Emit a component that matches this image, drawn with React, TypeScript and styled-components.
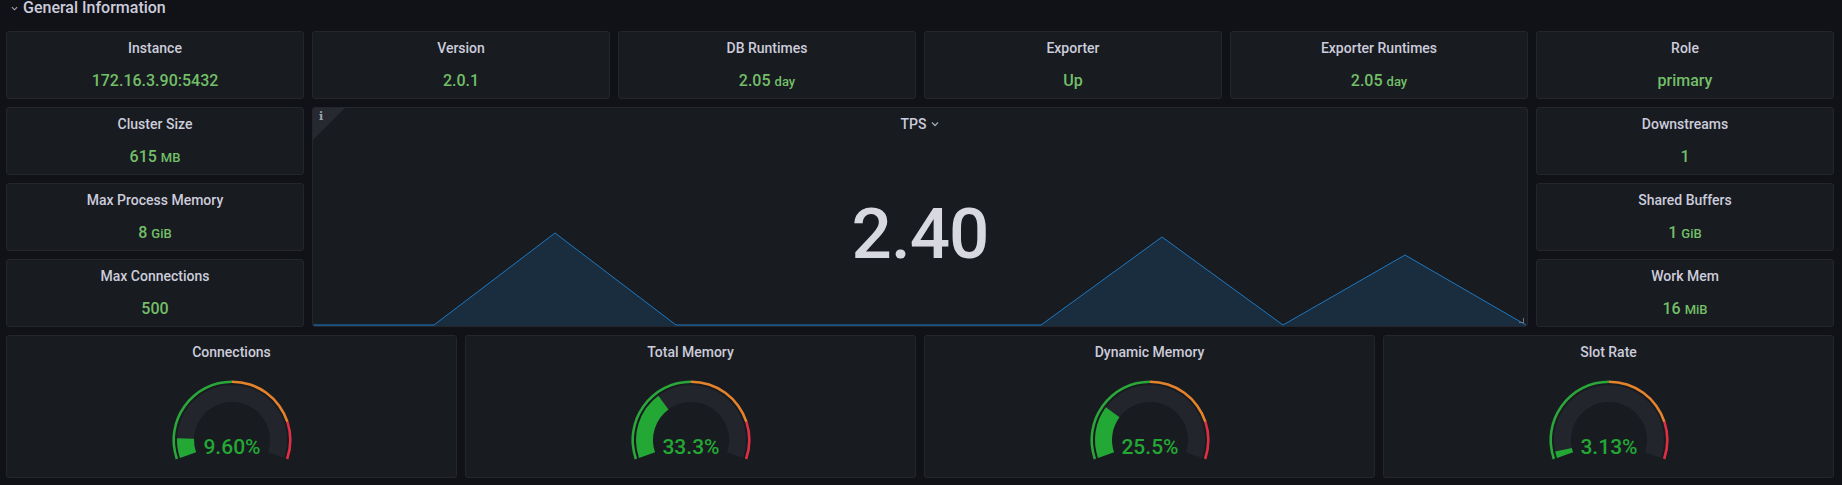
import React from 'react'
import styled, { createGlobalStyle } from 'styled-components'

const GlobalStyle = createGlobalStyle`
  body {
    margin: 0;
    background: #111217;
    font-family: Roboto, "Liberation Sans", sans-serif;
    color: #ccccdc;
  }
`

interface Stat {
  title: string;
  value: string;
  unit?: string;
}

const topRow: Stat[] = [
  { title: 'Instance', value: '172.16.3.90:5432' },
  { title: 'Version', value: '2.0.1' },
  { title: 'DB Runtimes', value: '2.05', unit: 'day' },
  { title: 'Exporter', value: 'Up' },
  { title: 'Exporter Runtimes', value: '2.05', unit: 'day' },
  { title: 'Role', value: 'primary' },
]

// left / right columns, interleaved so auto-placement fills around the TPS panel
const sideStats: Stat[] = [
  { title: 'Cluster Size', value: '615', unit: 'MB' },
  { title: 'Downstreams', value: '1' },
  { title: 'Max Process Memory', value: '8', unit: 'GiB' },
  { title: 'Shared Buffers', value: '1', unit: 'GiB' },
  { title: 'Max Connections', value: '500' },
  { title: 'Work Mem', value: '16', unit: 'MiB' },
]

const gauges = [
  { title: 'Connections', value: 9.6, label: '9.60%' },
  { title: 'Total Memory', value: 33.3, label: '33.3%' },
  { title: 'Dynamic Memory', value: 25.5, label: '25.5%' },
  { title: 'Slot Rate', value: 3.13, label: '3.13%' },
]

const sparkPoints: [number, number][] = [
  [0, 217], [121, 217], [242, 125], [363, 217], [728, 217],
  [849, 129], [970, 217], [1092, 147], [1213, 217],
]

const Chevron: React.FC<{ size?: number }> = ({ size = 7 }) => (
  <svg width={size} height={size} viewBox='0 0 8 8'>
    <path d='M1 2.5 L4 5.5 L7 2.5' fill='none' stroke='#9fa7b3' strokeWidth='1.3' />
  </svg>
)

// gauge geometry
const CX = 70
const CY = 62
const START = -109
const SWEEP = 218

const pt = (r: number, a: number) => {
  const rad = (a * Math.PI) / 180
  return [CX + r * Math.sin(rad), CY - r * Math.cos(rad)]
}

const band = (r0: number, r1: number, f0: number, f1: number) => {
  const a0 = START + SWEEP * f0
  const a1 = START + SWEEP * f1
  const large = a1 - a0 > 180 ? 1 : 0
  const [x0, y0] = pt(r1, a0)
  const [x1, y1] = pt(r1, a1)
  const [x2, y2] = pt(r0, a1)
  const [x3, y3] = pt(r0, a0)
  return `M${x0} ${y0} A${r1} ${r1} 0 ${large} 1 ${x1} ${y1} L${x2} ${y2} A${r0} ${r0} 0 ${large} 0 ${x3} ${y3} Z`
}

const Gauge: React.FC<{ value: number; label: string }> = ({ value, label }) => (
  <GaugeSvg width={140} height={86} viewBox='0 0 140 86'>
    <path d={band(57, 59.6, 0, 0.5)} fill='#2aa63a' />
    <path d={band(57, 59.6, 0.5, 0.83)} fill='#e5832d' />
    <path d={band(57, 59.6, 0.83, 1)} fill='#e02f44' />
    <path d={band(38, 55, 0, 1)} fill='#22252b' />
    <path d={band(38, 55, 0, value / 100)} fill='#23a735' />
    <text x={CX} y={75.5} textAnchor='middle'>{label}</text>
  </GaugeSvg>
)

const StatPanel: React.FC<{ stat: Stat }> = ({ stat }) => (
  <Panel>
    <Title>{stat.title}</Title>
    <Value>
      {stat.value}
      {stat.unit && <Unit>{stat.unit}</Unit>}
    </Value>
  </Panel>
)

const App: React.FC = () => {
  const line = sparkPoints.map(([x, y]) => `${x},${y}`).join(' ')
  const area = `0,218 ${line} 1213,218`
  return (
    <Page>
      <GlobalStyle />
      <RowHeader>
        <Chevron />
        <span>General Information</span>
      </RowHeader>
      <TopGrid>
        {topRow.map((s) => <StatPanel key={s.title} stat={s} />)}
        <TpsPanel>
          <Spark viewBox='0 0 1214 218' preserveAspectRatio='none'>
            <polygon points={area} fill='rgba(31,120,193,0.2)' />
            <polyline points={line} fill='none' stroke='#1f78c1' strokeWidth='1' />
          </Spark>
          <InfoCorner><span>i</span></InfoCorner>
          <Title>
            TPS <Chevron size={8} />
          </Title>
          <BigValue>2.40</BigValue>
          <ResizeHandle />
        </TpsPanel>
        {sideStats.map((s) => <StatPanel key={s.title} stat={s} />)}
      </TopGrid>
      <GaugeRow>
        {gauges.map((g) => (
          <GaugePanel key={g.title}>
            <Title>{g.title}</Title>
            <Gauge value={g.value} label={g.label} />
          </GaugePanel>
        ))}
      </GaugeRow>
    </Page>
  )
}

export default App

const Page = styled.div`
  width: 1842px;
  box-sizing: border-box;
  padding: 0 8px 0 6px;
`

const RowHeader = styled.div`
  height: 31px;
  display: flex;
  align-items: flex-start;
  gap: 5px;
  padding-left: 5px;
  font-size: 16px;
  line-height: 16px;
  font-weight: 500;
  color: #ccccdc;

  svg{
    margin-top: 5px;
  }
`

const TopGrid = styled.div`
  display: grid;
  grid-template-columns: repeat(6, 1fr);
  grid-template-rows: repeat(4, 68px);
  gap: 8px;
`

const Panel = styled.div`
  position: relative;
  box-sizing: border-box;
  background: #181b1f;
  border: 1px solid #24262b;
  border-radius: 3px;
  display: flex;
  flex-direction: column;
  align-items: center;
  padding-top: 6px;
  overflow: hidden;
`

const Title = styled.div`
  position: relative;
  display: flex;
  align-items: center;
  gap: 5px;
  height: 20px;
  font-size: 14px;
  font-weight: 500;
  color: #ccccdc;
`

const Value = styled.div`
  margin-top: 12px;
  font-size: 16px;
  line-height: 22px;
  font-weight: 500;
  color: #73bf69;
`

const Unit = styled.span`
  font-size: 13px;
  margin-left: 4px;
`

const TpsPanel = styled(Panel)`
  grid-column: 2 / 6;
  grid-row: 2 / 5;
`

const Spark = styled.svg`
  position: absolute;
  left: 0;
  top: 0;
  width: 100%;
  height: 100%;
`

const InfoCorner = styled.div`
  position: absolute;
  left: 0;
  top: 0;
  width: 0;
  height: 0;
  border-top: 32px solid #262930;
  border-right: 32px solid transparent;

  span{
    position: absolute;
    left: 6px;
    top: -30px;
    font-family: "DejaVu Serif", serif;
    font-weight: bold;
    font-size: 11px;
    color: #9fa7b3;
  }
`

const BigValue = styled.div`
  position: relative;
  flex: 1;
  display: flex;
  align-items: center;
  padding-top: 6px;
  font-size: 71px;
  font-weight: 500;
  letter-spacing: -1px;
  color: #d8d9e0;
`

const ResizeHandle = styled.div`
  position: absolute;
  right: 3px;
  bottom: 3px;
  width: 4px;
  height: 4px;
  border-right: 1px solid #6e7380;
  border-bottom: 1px solid #6e7380;
`

const GaugeRow = styled.div`
  display: grid;
  grid-template-columns: repeat(4, 1fr);
  gap: 8px;
  margin-top: 8px;
`

const GaugePanel = styled(Panel)`
  height: 143px;
  padding-top: 6px;
`

const GaugeSvg = styled.svg`
  margin-top: 16px;

  text{
    font-family: Roboto, "Liberation Sans", sans-serif;
    font-size: 21px;
    font-weight: 500;
    fill: #23a735;
  }
`
